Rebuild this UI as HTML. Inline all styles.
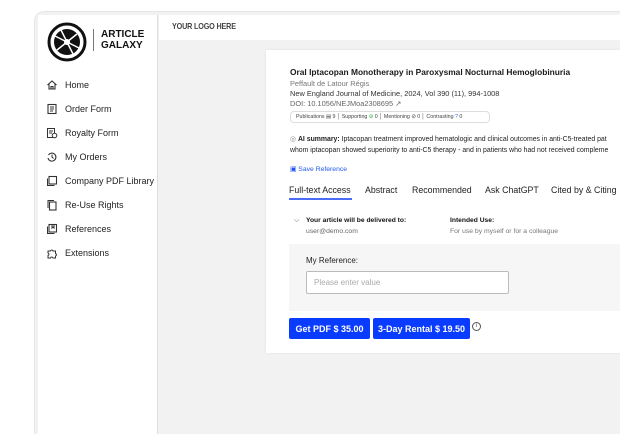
<!DOCTYPE html>
<html style="overflow:hidden;height:434px"><head><style>
*{margin:0;padding:0;box-sizing:border-box}
body{width:620px;height:434px;background:#fff;font-family:"Liberation Sans",sans-serif;position:relative;overflow:hidden;color:#111}
.frame{position:absolute;left:34px;top:11px;width:586px;height:423px;background:#f2f2f2;border-radius:10px 0 0 0;border:1px solid #e6e6e6;border-bottom:none;border-right:none}
.side{position:absolute;left:38px;top:15px;width:120px;height:419px;background:#fff;border-right:1px solid #ddd}
.hdr{position:absolute;left:159px;top:15px;width:461px;height:25px;background:#fff}
.main{position:absolute;left:159px;top:40px;width:461px;height:394px;background:#f2f2f2}
.nav{position:absolute;left:46px;font-size:9px;color:#222;display:flex;align-items:center}
.nav svg{width:12px;height:12px;margin-right:7px}
.card{position:absolute;left:266px;top:50px;width:354px;height:303px;background:#fff;box-shadow:0 0 2px #ddd}
.t{position:absolute;white-space:nowrap}
.btn{position:absolute;top:318px;height:21px;background:#0a3cff;color:#fff;font-weight:bold;font-size:9px;display:flex;align-items:center;justify-content:center;border-radius:2px}
</style></head><body>
<div class="frame"></div>
<div class="side"></div>
<div class="hdr"><div class="t" style="left:13px;top:6px;font-size:8.5px;font-weight:bold;color:#444;transform:scaleX(.85);transform-origin:left;letter-spacing:-.2px">YOUR LOGO HERE</div></div>
<div class="main"></div>
<svg style="position:absolute;left:47px;top:22px" width="40" height="40" viewBox="0 0 40 40"><circle cx="20" cy="20" r="18" fill="none" stroke="#111" stroke-width="3"/><circle cx="20" cy="20" r="13" fill="#111"/><path d="M8 14L32 26M14 8L26 32M10 28L30 12" stroke="#fff" stroke-width="1.5"/><circle cx="20" cy="20" r="3" fill="#fff"/></svg>
<div class="t" style="left:93px;top:29px;width:1px;height:22px;background:#777"></div>
<div class="t" style="left:101px;top:29px;font-size:10px;font-weight:bold;line-height:11px">ARTICLE<br>GALAXY</div>
<div class="nav" style="top:79px"><svg viewBox="0 0 12 12"><path d="M1.5 6L6 2l4.5 4M3 5v5h6V5M5 10V7.5h2V10" fill="none" stroke="#333" stroke-width="1.1"/></svg>Home</div>
<div class="nav" style="top:103px"><svg viewBox="0 0 12 12"><rect x="2" y="1.5" width="8" height="9" fill="none" stroke="#333" stroke-width="1.1"/><path d="M4 4h4M4 6h4M4 8h3" stroke="#333"/></svg>Order Form</div>
<div class="nav" style="top:127px"><svg viewBox="0 0 12 12"><rect x="1.5" y="1.5" width="7" height="9" fill="none" stroke="#333"/><path d="M3 4h4M3 6h3" stroke="#333"/><circle cx="8.5" cy="8.5" r="2.3" fill="#fff" stroke="#333"/></svg>Royalty Form</div>
<div class="nav" style="top:151px"><svg viewBox="0 0 12 12"><path d="M2.5 4A4 4 0 1 1 2 7" fill="none" stroke="#333" stroke-width="1.1"/><path d="M6 3.5V6l1.5 1.5" fill="none" stroke="#333"/></svg>My Orders</div>
<div class="nav" style="top:175px"><svg viewBox="0 0 12 12"><rect x="3" y="1.5" width="7.5" height="7.5" fill="none" stroke="#333" stroke-width="1.1"/><path d="M1.5 3.5v7h7" fill="none" stroke="#333"/></svg>Company PDF Library</div>
<div class="nav" style="top:199px"><svg viewBox="0 0 12 12"><rect x="3.5" y="3" width="6.5" height="8" fill="none" stroke="#333" stroke-width="1.1"/><path d="M2 9V1.5h6" fill="none" stroke="#333"/></svg>Re-Use Rights</div>
<div class="nav" style="top:223px"><svg viewBox="0 0 12 12"><rect x="3" y="1.5" width="7.5" height="7.5" fill="none" stroke="#333" stroke-width="1.1"/><path d="M1.5 3.5v7h7M6 1.5v3.5l1-1 1 1V1.5" fill="none" stroke="#333"/></svg>References</div>
<div class="nav" style="top:247px"><svg viewBox="0 0 12 12"><path d="M2 4h2.5a1.3 1.3 0 0 1 2.5 0H9.5v2.5a1.3 1.3 0 0 1 0 2.5V11H7a1.3 1.3 0 0 0-2.5 0H2V8.5a1.3 1.3 0 0 0 0-2.5z" fill="none" stroke="#333"/></svg>Extensions</div>

<div class="card"></div>
<div class="t" style="left:290px;top:67px;font-size:8.4px;font-weight:bold;color:#1a1a1a">Oral Iptacopan Monotherapy in Paroxysmal Nocturnal Hemoglobinuria</div>
<div class="t" style="left:290px;top:79px;font-size:7.4px;color:#777">Peffault de Latour Régis</div>
<div class="t" style="left:290px;top:89px;font-size:7.4px;color:#333">New England Journal of Medicine, 2024, Vol 390 (11), 994-1008</div>
<div class="t" style="left:290px;top:99px;font-size:7.4px;color:#666">DOI: 10.1056/NEJMoa2308695 ↗</div>
<div class="t" style="left:290px;top:111px;width:200px;height:12px;border:1px solid #ddd;border-radius:4px;font-size:5.3px;color:#444;line-height:10px;padding-left:5px">Publications ▤ 9 │ Supporting <span style="color:#2a2">⊘</span> 0 │ Mentioning ⊘ 0 │ Contrasting <span style="color:#36f">?</span> 0</div>
<div class="t" style="left:290px;top:135px;font-size:6.9px;color:#222;line-height:10.5px"><span style="color:#888">◎</span> <b>AI summary:</b> Iptacopan treatment improved hematologic and clinical outcomes in anti-C5-treated pat<br>whom iptacopan showed superiority to anti-C5 therapy - and in patients who had not received compleme</div>
<div class="t" style="left:290px;top:165px;font-size:6.8px;color:#2255ee">▣ Save Reference</div>
<div class="t" style="left:289px;top:185px;font-size:8.8px;color:#222">Full-text Access</div>
<div class="t" style="left:289px;top:198px;width:63px;height:1.5px;background:#4a6cf7"></div>
<div class="t" style="left:365px;top:185px;font-size:8.8px;color:#222">Abstract</div>
<div class="t" style="left:412px;top:185px;font-size:8.8px;color:#222">Recommended</div>
<div class="t" style="left:485px;top:185px;font-size:8.8px;color:#222">Ask ChatGPT</div>
<div class="t" style="left:551px;top:185px;font-size:8.8px;color:#222">Cited by &amp; Citing</div>
<div class="t" style="left:294px;top:217px;font-size:7px;color:#555">⌵</div>
<div class="t" style="left:306px;top:217px;font-size:6.7px;font-weight:bold">Your article will be delivered to:</div>
<div class="t" style="left:306px;top:228px;font-size:6.8px;color:#666">user@demo.com</div>
<div class="t" style="left:450px;top:217px;font-size:6.7px;font-weight:bold">Intended Use:</div>
<div class="t" style="left:450px;top:228px;font-size:6.8px;color:#777">For use by myself or for a colleague</div>
<div class="t" style="left:289px;top:244px;width:331px;height:67px;background:#f6f6f6"></div>
<div class="t" style="left:306px;top:256px;font-size:8px;color:#222">My Reference:</div>
<div class="t" style="left:306px;top:271px;width:203px;height:23px;background:#fff;border:1px solid #bbb;border-radius:2px;font-size:8px;color:#aaa;padding:6px 7px">Please enter value</div>
<div class="btn" style="left:289px;width:81px">Get PDF $ 35.00</div>
<div class="btn" style="left:373px;width:97px">3-Day Rental $ 19.50</div>
<div class="t" style="left:472px;top:322px;width:9px;height:9px;border:1px solid #555;border-radius:50%;font-size:6px;text-align:center;line-height:7px;color:#555">i</div>
</body></html>
